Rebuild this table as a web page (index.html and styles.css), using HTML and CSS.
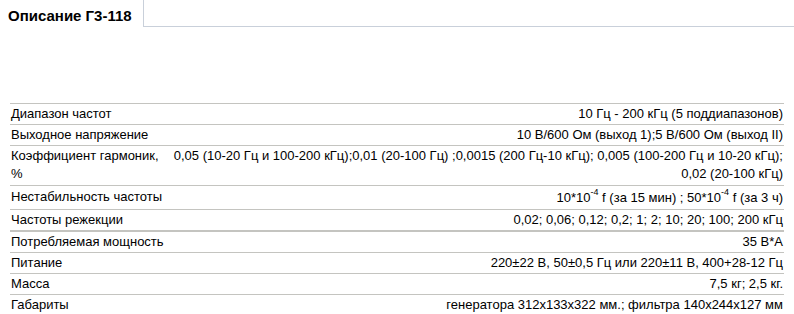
FILE: index.html
```html
<!DOCTYPE html>
<html>
<head>
<meta charset="utf-8">
<link rel="stylesheet" href="styles.css">
</head>
<body>
<div class="tabs">
  <div class="tab-active">Описание Г3-118</div>
  <div class="tab-rest"></div>
</div>
<table class="specs">
  <tr><td class="name">Диапазон частот</td><td class="val">10 Гц - 200 кГц (5 поддиапазонов)</td></tr>
  <tr><td class="name">Выходное напряжение</td><td class="val">10 В/600 Ом (выход 1);5 В/600 Ом (выход II)</td></tr>
  <tr class="tall"><td class="name">Коэффициент гармоник, %</td><td class="val">0,05 (10-20 Гц и 100-200 кГц);0,01 (20-100 Гц) ;0,0015 (200 Гц-10 кГц); 0,005 (100-200 Гц и 10-20 кГц); 0,02 (20-100 кГц)</td></tr>
  <tr class="tall2"><td class="name">Нестабильность частоты</td><td class="val">10*10<sup>-4</sup> f (за 15 мин) ; 50*10<sup>-4</sup> f (за 3 ч)</td></tr>
  <tr class="thick"><td class="name">Частоты режекции</td><td class="val">0,02; 0,06; 0,12; 0,2; 1; 2; 10; 20; 100; 200 кГц</td></tr>
  <tr><td class="name">Потребляемая мощность</td><td class="val">35 В*А</td></tr>
  <tr><td class="name">Питание</td><td class="val">220±22 В, 50±0,5 Гц или 220±11 В, 400+28-12 Гц</td></tr>
  <tr><td class="name">Масса</td><td class="val">7,5 кг; 2,5 кг.</td></tr>
  <tr><td class="name">Габариты</td><td class="val">генератора 312х133х322 мм.; фильтра 140х244х127 мм</td></tr>
</table>
</body>
</html>
```
FILE: styles.css
```css
html, body {
  margin: 0;
  padding: 0;
  background: #ffffff;
  color: #000000;
  font-family: "Liberation Sans", Arial, sans-serif;
  font-size: 13px;
}
.tabs {
  display: flex;
  height: 27px;
}
.tab-active {
  padding: 7px 0 0 8px;
  width: 143px;
  box-sizing: border-box;
  font-weight: bold;
  font-size: 15px;
  line-height: 18px;
}
.tab-rest {
  flex: 1;
  border-left: 1px solid #c9d0da;
  border-bottom: 1px solid #c9d0da;
}
.specs {
  margin: 76px 10px 0 10px;
  width: 774px;
  border-collapse: collapse;
  border-top: 1px solid #c4c4c0;
}
.specs td {
  padding: 1px 1px 1px 1px;
  border-bottom: 1px solid #c4c4c0;
  line-height: 18px;
  vertical-align: top;
}
.specs tr.tall td {
  padding-bottom: 2px;
}
.specs tr.tall2 td {
  padding-top: 2px;
  padding-bottom: 2px;
}
.specs tr.thick td {
  border-bottom: 2px solid #c4c4c0;
}
.specs .name {
  width: 156px;
  padding-right: 2px;
}
.specs .val {
  text-align: right;
}
.specs sup {
  font-size: 9px;
  line-height: 9px;
  vertical-align: 7px;
}
```
